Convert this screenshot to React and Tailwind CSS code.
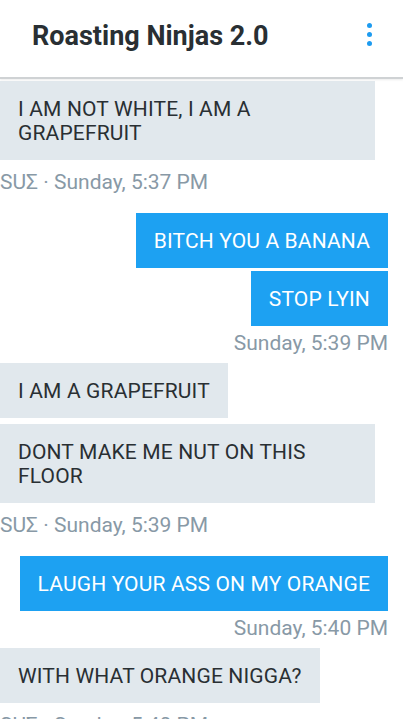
const messages = [
  {
    side: 'in',
    bubbles: ['I AM NOT WHITE, I AM A GRAPEFRUIT'],
    meta: 'SUΣ · Sunday, 5:37 PM',
  },
  {
    side: 'out',
    bubbles: ['BITCH YOU A BANANA', 'STOP LYIN'],
    meta: 'Sunday, 5:39 PM',
  },
  {
    side: 'in',
    bubbles: ['I AM A GRAPEFRUIT', 'DONT MAKE ME NUT ON THIS FLOOR'],
    meta: 'SUΣ · Sunday, 5:39 PM',
  },
  {
    side: 'out',
    bubbles: ['LAUGH YOUR ASS ON MY ORANGE'],
    meta: 'Sunday, 5:40 PM',
  },
  {
    side: 'in',
    bubbles: ['WITH WHAT ORANGE NIGGA?'],
    meta: 'SUΣ · Sunday, 5:40 PM',
  },
];

function Group({ side, bubbles, meta }) {
  const isOut = side === 'out';
  return (
    <div
      className={`flex flex-col ${
        isOut ? 'items-end pr-[15px] gap-[3px] pb-[8px]' : 'items-start gap-[6px] pb-[19px]'
      }`}
    >
      {bubbles.map((text, i) => (
        <div
          key={i}
          className={`px-[18px] py-[15.5px] text-[21px] leading-6 tracking-[0.15px] ${
            isOut
              ? 'bg-[#1da1f2] text-white max-w-[390px]'
              : 'bg-[#e1e8ed] text-[#292f33] max-w-[375px]'
          }`}
        >
          {text}
        </div>
      ))}
      {/* meta line: gap already adds 6px / 3px above it */}
      <div
        className={`h-6 whitespace-nowrap text-[21px] leading-6 text-[#8899a6] ${
          isOut ? 'mt-[2px]' : 'mt-[4px]'
        }`}
      >
        {meta}
      </div>
    </div>
  );
}

export default function App() {
  return (
    <div
      className="w-[403px] h-[719px] overflow-hidden bg-white"
      style={{ fontFamily: 'Roboto, "Noto Sans", sans-serif' }}
    >
      {/* ── Header ── */}
      <div className="h-[79px] border-b-2 border-[#cfd2d4] shadow-[0_1px_2px_rgba(0,0,0,0.08)] flex items-start justify-between pl-[32px] pr-[31px]">
        <h1 className="pt-[20px] text-[27px] leading-8 font-bold text-[#292f33]">Roasting Ninjas 2.0</h1>
        <div className="flex flex-col items-center gap-[4px] pt-[23px]">
          <span className="w-[5px] h-[5px] rounded-full bg-[#1d9bf0]" />
          <span className="w-[5px] h-[5px] rounded-full bg-[#1d9bf0]" />
          <span className="w-[5px] h-[5px] rounded-full bg-[#1d9bf0]" />
        </div>
      </div>

      {/* ── Messages ── */}
      <div className="pt-[2px]">
        {messages.map((m, i) => (
          <Group key={i} {...m} />
        ))}
      </div>
    </div>
  );
}
